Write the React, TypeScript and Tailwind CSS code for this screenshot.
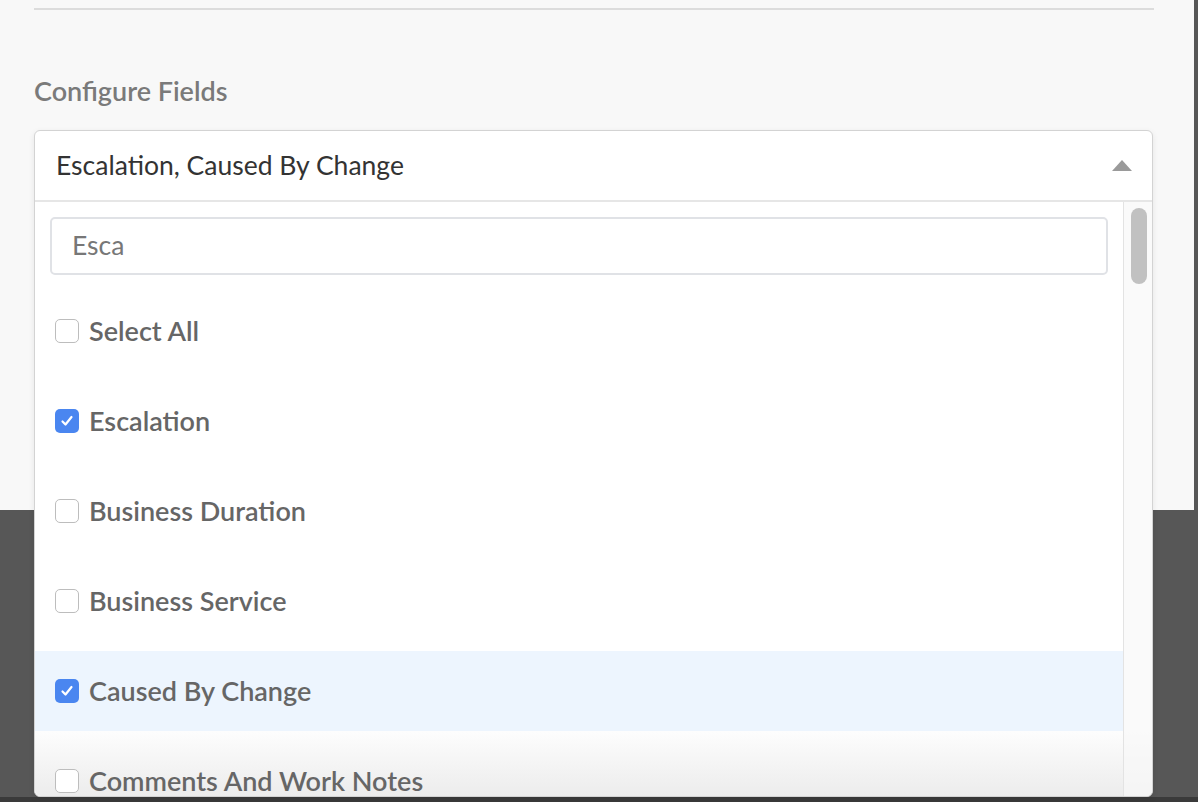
const fields = [
  { label: "Select All", checked: false },
  { label: "Escalation", checked: true },
  { label: "Business Duration", checked: false },
  { label: "Business Service", checked: false },
  { label: "Caused By Change", checked: true, active: true },
  { label: "Comments And Work Notes", checked: false },
];

function Checkbox({ checked }: { checked: boolean }) {
  if (checked) {
    return (
      <span className="flex h-[24px] w-[24px] shrink-0 items-center justify-center rounded-[5px] bg-[#4a86f0]">
        <svg width="16" height="16" viewBox="0 0 16 16" fill="none">
          <path d="M3.5 8.5l3 3 6-7.5" stroke="white" strokeWidth="2.2" strokeLinecap="round" strokeLinejoin="round" />
        </svg>
      </span>
    );
  }
  return <span className="h-[24px] w-[24px] shrink-0 rounded-[5px] border border-[#bdbdbd] bg-white" />;
}

export default function App() {
  return (
    <div
      className="relative h-[802px] w-[1198px] overflow-hidden bg-[#575757]"
      style={{ fontFamily: "Lato, 'Open Sans', sans-serif" }}
    >
      <div className="h-[510px] w-[1194px] bg-[#f8f8f8] pt-2">
        <div className="ml-[34px] h-[2px] w-[1120px] bg-[#dcdcdc]" />
        <div className="ml-[34px] mt-[66px] h-[30px] text-[27px] font-semibold leading-[30px] text-[#7a7a7a]">
          Configure Fields
        </div>
        <div className="relative z-10 ml-[34px] mt-[24px] w-[1119px] rounded-md border border-[#d3d3d3] bg-white shadow-[0_2px_6px_rgba(0,0,0,0.08)]">
          <div className="flex h-[69px] items-center justify-between pl-[21px] pr-[20px]">
            <span className="text-[26.5px] text-[#333333]">Escalation, Caused By Change</span>
            <svg width="20" height="11" viewBox="0 0 20 11">
              <path d="M10 0L20 11H0z" fill="#9a9a9a" />
            </svg>
          </div>
          <div className="flex h-[596px] overflow-hidden rounded-b-md border-t-2 border-[#e6e6e6] bg-gradient-to-b from-white via-white via-[88%] to-[#ececec]">
            <div className="flex min-w-0 flex-1 flex-col">
              <div className="mx-[15px] mt-[15px] flex h-[58px] shrink-0 items-center rounded-[5px] border-2 border-[#e0e2e6] bg-white px-[20px] text-[26.5px] text-[#777777]">
                Esca
              </div>
              <ul className="mt-[16px] flex shrink-0 flex-col gap-[10px]">
                {fields.map((f) => (
                  <li
                    key={f.label}
                    className={`flex h-[80px] shrink-0 items-center gap-[10px] pl-[20px] ${f.active ? "bg-[#edf5fe]" : ""}`}
                  >
                    <Checkbox checked={f.checked} />
                    <span className="text-[27px] font-semibold text-[#666666]">{f.label}</span>
                  </li>
                ))}
              </ul>
            </div>
            <div className="w-[29px] shrink-0 border-l border-[#e3e3e3] bg-[#f8f8f8]/70 px-[7px] pt-[6px]">
              <div className="h-[76px] w-[16px] rounded-full bg-[#c1c1c1]" />
            </div>
          </div>
        </div>
      </div>
      <div className="absolute inset-x-0 bottom-0 h-[5px] bg-[#3a3a3a]" />
    </div>
  );
}
